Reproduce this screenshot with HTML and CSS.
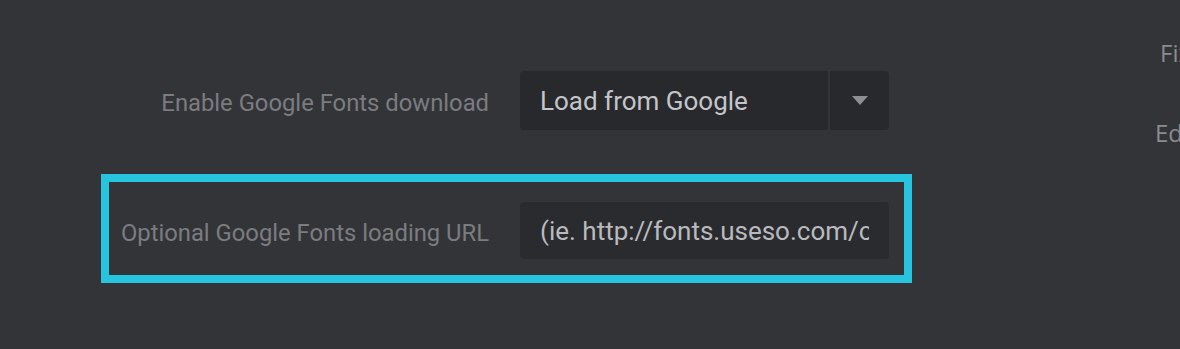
FILE: index.html
```html
<!DOCTYPE html>
<html lang="en">
<head>
    <meta charset="UTF-8">
    <title>Font Settings</title>
    <link rel="stylesheet" href="styles.css">
</head>
<body>
    <div id="settings-page">
        <div id="font-form">
            <div class="form-row">
                <label class="row-label" for="google-fonts">Enable Google Fonts download</label>
                <div class="select-box" id="google-fonts">
                    <span class="select-value">Load from Google</span>
                    <span class="select-toggle"><span class="caret"></span></span>
                </div>
            </div>
            <div class="form-row highlighted">
                <label class="row-label" for="fonts-url">Optional Google Fonts loading URL</label>
                <div class="text-input" id="fonts-url"><span class="input-text">(ie. http://fonts.useso.com/css?family=)</span></div>
            </div>
        </div>
        <div id="side-column">
            <p class="side-label first">Fixed</p>
            <p class="side-label">Editor</p>
        </div>
    </div>
</body>
</html>
```

FILE: styles.css
```css
body {
    margin: 0;
    padding: 0;
    background-color: #333438;
    font-family: Roboto, "Liberation Sans", sans-serif;
    overflow: hidden;
    height: 349px;
}

#settings-page {
    display: flex;
    width: 1180px;
    overflow: hidden;
}

#font-form {
    margin-left: 101px;
    padding-top: 43px;
    display: flex;
    flex-direction: column;
    gap: 20px;
}

.form-row {
    display: flex;
    align-items: center;
    border: 8px solid transparent;
    padding: 20px 15px 16px 0;
}

.form-row.highlighted {
    border-color: #27c4e0;
}

.row-label {
    width: 380px;
    text-align: right;
    color: #7b7c80;
    font-size: 23.8px;
    margin-right: 31px;
    padding-top: 4px;
    white-space: nowrap;
}

.select-box {
    width: 369px;
    height: 59px;
    display: flex;
    background-color: #28292d;
    border-radius: 4px;
    overflow: hidden;
}

.select-value {
    flex: 1;
    display: flex;
    align-items: center;
    padding-left: 20px;
    color: #c4c5c8;
    font-size: 26px;
    border-right: 2px solid #333438;
}

.select-toggle {
    width: 59px;
    display: flex;
    align-items: center;
    justify-content: center;
}

.caret {
    width: 0;
    height: 0;
    border-left: 8px solid transparent;
    border-right: 8px solid transparent;
    border-top: 9px solid #8e8f93;
}

.text-input {
    width: 329px;
    height: 57px;
    padding: 0 20px;
    display: flex;
    align-items: center;
    background-color: #2a2b2f;
    border-radius: 4px;
    color: #b9babd;
    font-size: 26px;
}

.input-text {
    display: block;
    width: 100%;
    overflow: hidden;
    white-space: nowrap;
}

#side-column {
    margin-left: 243px;
    padding-top: 36px;
}

.side-label {
    margin: 0 0 47px 0;
    font-family: "Open Sans", sans-serif;
    font-size: 24px;
    color: #8a8b8f;
    white-space: nowrap;
}

.side-label.first {
    padding-left: 5px;
}
```
